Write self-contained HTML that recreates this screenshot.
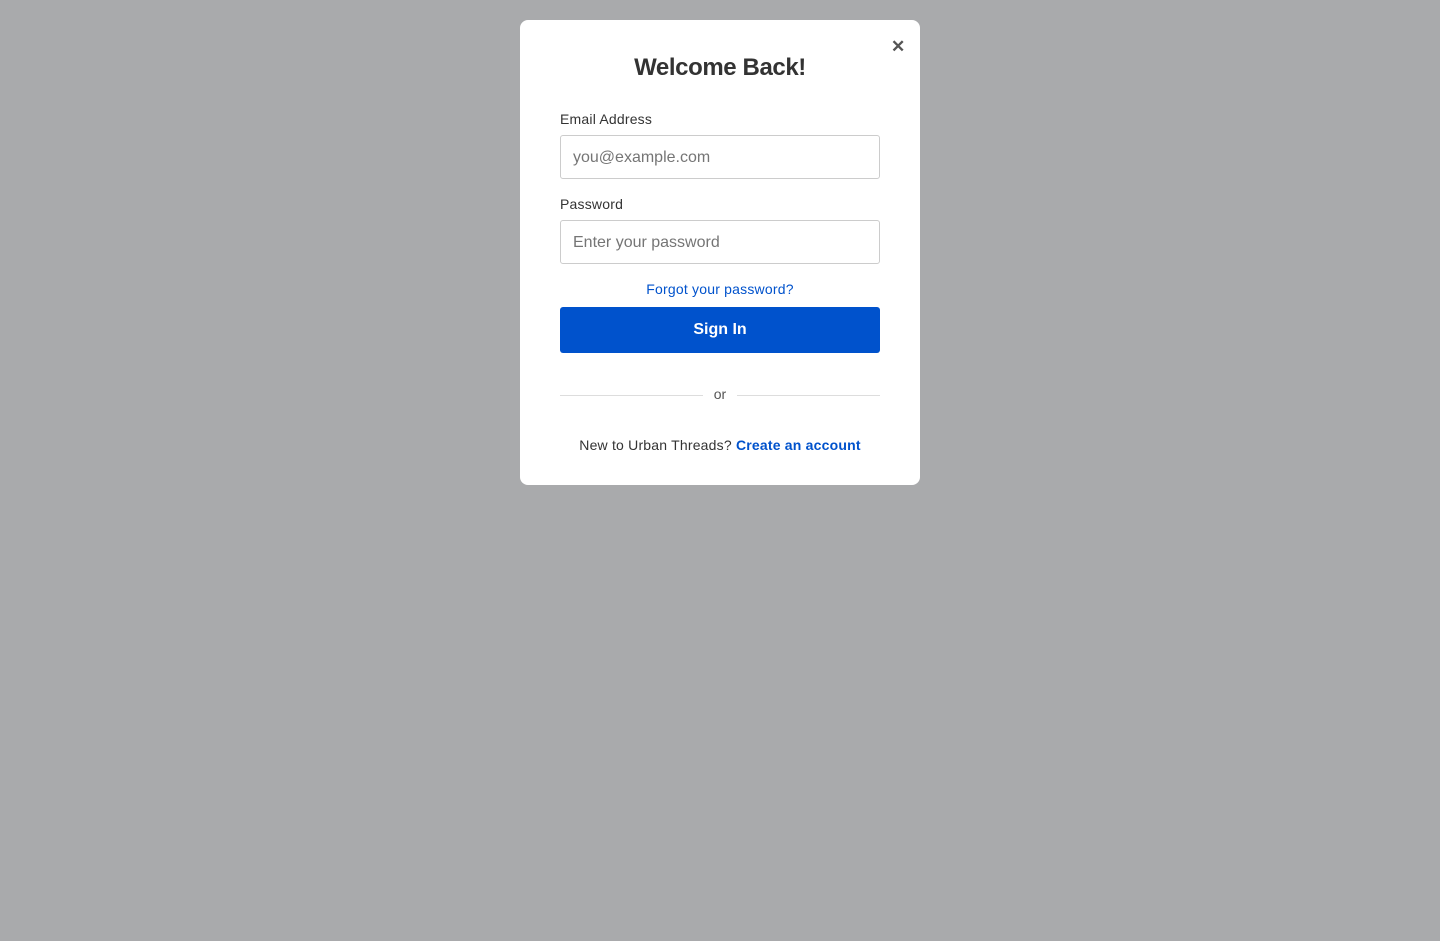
<!DOCTYPE html>
<html><head><style>
body{margin:0;width:1440px;height:941px;background:#a9aaac;font-family:"Liberation Sans",sans-serif;position:relative;overflow:hidden}
.m{position:absolute;left:520px;top:20px;width:400px;height:465px;background:#fff;border-radius:8px;}
.x{position:absolute;left:891px;top:37px;font-size:17px;font-weight:bold;color:#555}
h1{position:absolute;left:520px;width:400px;top:54px;margin:0;text-align:center;font-size:24px;font-weight:bold;color:#333;line-height:28px;letter-spacing:-0.4px}
.l{position:absolute;left:560px;font-size:14px;color:#333;letter-spacing:0.2px}
.i{position:absolute;left:560px;width:318px;height:42px;border:1px solid #ccc;border-radius:3px;font-size:16px;color:#757575;line-height:44px;box-sizing:content-box}
.i span{margin-left:12px}
.f{position:absolute;left:520px;width:400px;top:281px;text-align:center;font-size:14px;color:#0052cc;letter-spacing:0.2px}
.b{position:absolute;left:560px;top:307px;width:320px;height:46px;background:#0052cc;border-radius:3px;color:#fff;font-weight:bold;font-size:16px;text-align:center;line-height:46px}
.hr{position:absolute;top:395px;height:1px;background:#ddd;width:143px}
.or{position:absolute;left:520px;width:400px;top:386px;text-align:center;font-size:14px;color:#555}
.n{position:absolute;left:520px;width:400px;top:437px;text-align:center;font-size:14px;color:#333;letter-spacing:0.2px}
.n b{color:#0052cc}
</style></head><body>
<div class="m"></div>
<div class="x">✕</div>
<h1>Welcome Back!</h1>
<div class="l" style="top:111px">Email Address</div>
<div class="i" style="top:135px"><span>you@example.com</span></div>
<div class="l" style="top:196px">Password</div>
<div class="i" style="top:220px"><span>Enter your password</span></div>
<div class="f">Forgot your password?</div>
<div class="b">Sign In</div>
<div class="hr" style="left:560px"></div><div class="hr" style="left:737px"></div>
<div class="or">or</div>
<div class="n">New to Urban Threads? <b>Create an account</b></div>
</body></html>
